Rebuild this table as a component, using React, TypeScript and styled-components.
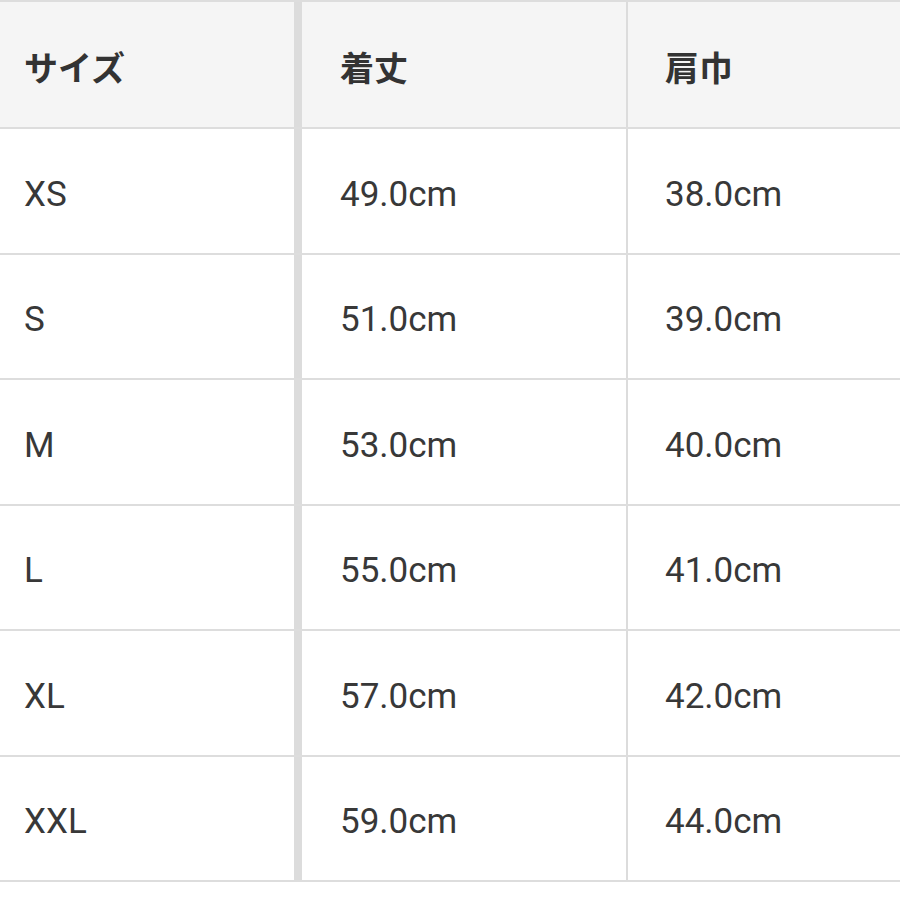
import React from "react";
import styled, { createGlobalStyle } from "styled-components";

const GlobalStyle = createGlobalStyle`
  body {
    margin: 0;
    background: #ffffff;
    font-family: Roboto, "Noto Sans CJK JP", sans-serif;
  }
`;

const Table = styled.div`
  width: 900px;
  border-top: 2px solid #dddddd;
`;

const Row = styled.div<{ $head?: boolean }>`
  display: grid;
  grid-template-columns: 302px 326px 1fr;
  height: ${(p) => (p.$head ? "127px" : "125.5px")};
  box-sizing: border-box;
  border-bottom: 2px solid #dddddd;
  background: ${(p) => (p.$head ? "#f5f5f5" : "#ffffff")};
`;

const Cell = styled.div<{ $divider: number; $pad: number; $head?: boolean }>`
  display: flex;
  align-items: center;
  box-sizing: border-box;
  padding-left: ${(p) => p.$pad}px;
  padding-top: ${(p) => (p.$head ? "4px" : "7px")};
  border-right: ${(p) => p.$divider}px solid #dcdcdc;
  font-size: ${(p) => (p.$head ? "34px" : "35px")};
  font-weight: ${(p) => (p.$head ? 700 : 400)};
  color: ${(p) => (p.$head ? "#333333" : "#383838")};
  white-space: nowrap;
`;

const rows = [
  ["XS", "49.0cm", "38.0cm"],
  ["S", "51.0cm", "39.0cm"],
  ["M", "53.0cm", "40.0cm"],
  ["L", "55.0cm", "41.0cm"],
  ["XL", "57.0cm", "42.0cm"],
  ["XXL", "59.0cm", "44.0cm"],
];

const cols = [
  { divider: 8, pad: 24 },
  { divider: 2, pad: 38 },
  { divider: 0, pad: 37 },
];

export default function App() {
  return (
    <>
      <GlobalStyle />
      <Table>
        <Row $head>
          {["サイズ", "着丈", "肩巾"].map((t, i) => (
            <Cell key={t} $head $divider={cols[i].divider} $pad={cols[i].pad}>
              {t}
            </Cell>
          ))}
        </Row>
        {rows.map((r) => (
          <Row key={r[0]}>
            {r.map((t, i) => (
              <Cell key={i} $divider={cols[i].divider} $pad={cols[i].pad}>
                {t}
              </Cell>
            ))}
          </Row>
        ))}
      </Table>
    </>
  );
}
